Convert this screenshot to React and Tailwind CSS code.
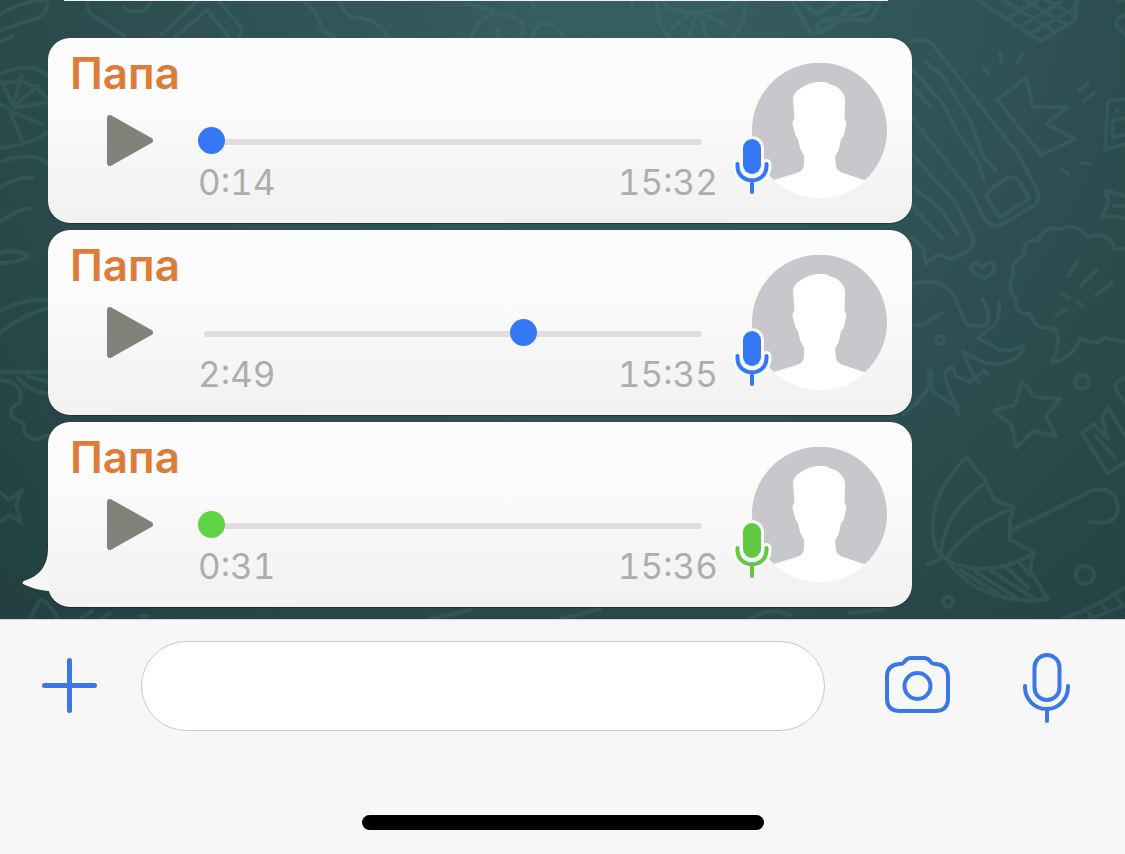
import React from "react";

const messages = [
  { id: "m1", sender: "Папа", elapsed: "0:14", time: "15:32", progress: 0, played: true },
  { id: "m2", sender: "Папа", elapsed: "2:49", time: "15:35", progress: 646, played: true },
  { id: "m3", sender: "Папа", elapsed: "0:31", time: "15:36", progress: 0, played: false, tail: true },
];

function Wallpaper() {
  return (
    <svg
      aria-hidden="true"
      viewBox="0 0 1125 619"
      preserveAspectRatio="xMidYMin slice"
      className="absolute inset-0 h-full w-full text-[#4a7a7a] opacity-25"
      fill="none"
      stroke="currentColor"
      strokeWidth="4"
      strokeLinecap="round"
      strokeLinejoin="round"
    >
      {/* waffle cone */}
      <path d="M978 0 L1007 19 L1041 41 L1075 20 L1077 0 M1007 19 L1038 0 M1020 27 L1060 2 M1030 34 L1075 8 M1003 0 L1056 32 M1025 0 L1067 25 M1046 0 L1076 17" />
      {/* comb */}
      <path d="M912 42 Q925 36 934 46 L1018 154 L1037 190 Q1042 202 1030 208 L1002 224 Q990 230 982 215 L973 195 L912 118" />
      <path d="M912 70 L942 102 L960 136 L978 162 L984 180 M926 62 L942 76 L958 100 M912 87 L930 106 M942 76 L970 120 L984 158 L996 170 M988 199 Q984 194 991 189 L1007 178 Q1016 175 1021 184 L1029 199 L1000 217 Z" />
      <path d="M912 154 L955 202 L974 239 Q974 252 950 259 L938 254 L926 264 L923 247 L912 238 M912 187 L940 208 L958 235 M912 207 L942 238" />
      {/* crown */}
      <path d="M997 100 L1026 78 L1033 107 L1068 107 L1046 124 L1075 139 L1041 155 Z M984 68 L988 73 M1000 53 L1002 63 M1022 53 L1018 62 M1088 83 L1079 91 M1095 92 L1084 101 M1062 170 L1068 174 M1082 163 L1090 164" />
      {/* tickets at the edge */}
      <path d="M1125 99 L1112 100 Q1106 102 1107 112 L1105 150 L1125 144 M1117 110 v2 M1125 118 L1113 120 V138 L1125 134 M1125 196 L1105 190 L1109 202 L1102 216 L1125 218 M1125 206 H1114 M1125 15 Q1114 18 1117 27 L1125 35 M1118 0 h7" />
      {/* speech cloud */}
      <path d="M1125 249 L1115 249 Q1108 230 1088 237 Q1078 222 1060 229 Q1045 225 1038 240 Q1022 240 1024 256 Q1009 262 1014 275 Q1005 290 1017 300 Q1014 315 1030 314 Q1034 328 1048 328 L1056 330 Q1062 345 1051 363 Q1075 357 1080 338 Q1095 347 1104 338 L1125 342" />
      <path d="M1077 262 L1069 276 M1097 270 L1081 286 M1112 283 L1096 295 M1061 293 L1065 296 M1068 298 h1 M1083 307 L1078 302 M1057 315 L1066 309" />
      {/* heart and goose */}
      <path d="M984 278 Q969 272 971 265 Q976 261 983 268 Q990 259 994 265 Q995 274 984 278" />
      <path d="M912 284 Q942 276 954 296 L963 318 L967 325 L984 326 Q994 318 982 299 M999 302 Q1000 325 990 328 L978 338 L1000 350 Q1010 352 1023 346 M1023 349 Q1014 367 985 363 L963 352 L972 373 L979 383 M1016 347 L1022 350" />
      <path d="M903 414 Q925 398 931 382 Q933 368 929 371 Q927 390 942 398 Q958 406 958 414 M958 407 Q940 375 948 369 Q955 365 955 376 L970 382 L984 371 L987 374 M912 325 L922 325 L942 313 M940 336 a4 4 0 1 0 .1 0" />
      {/* star and bubbles */}
      <path d="M1022 382 L1035 397 L1060 399 L1046 416 L1056 436 L1033 431 L1016 448 L1012 425 L993 411 L1015 405 Z" />
      <circle cx="1082" cy="382" r="7" />
      <circle cx="1085" cy="575" r="9" />
      <circle cx="948" cy="602" r="5" />
      {/* letters ticket */}
      <path d="M1125 378 L1117 382 Q1114 386 1118 394 L1125 402 M1125 462 L1108 474 L1082 433 L1094 424 L1108 439 L1102 418 L1108 408 L1125 436 M1096 436 L1115 458" />
      {/* umbrella */}
      <path d="M966 457 C940 486 932 505 933 530 C933 550 941 556 947 560 C967 590 1002 603 1048 600 L1030 570 L1034 552 L1010 540 L1010 520 L1014 507 L994 500 L985 480 Z M941 553 Q945 512 983 485 M947 558 Q968 525 1012 509 M947 560 Q985 580 1034 554 M927 565 L941 558 M1010 531 L1091 491 Q1117 485 1118 509 Q1117 526 1090 522" />
      <path d="M960 570 L1005 598 M976 572 L1020 600 M990 570 L1035 599 M1005 566 L1028 588 M1018 561 L1030 576" />
      {/* film strip */}
      <path d="M1063 619 Q1100 605 1125 587 M1090 619 L1125 605 M1085 609 l8 8 M1100 602 l7 9 M1114 594 l7 9" />
      {/* strip above the first bubble */}
      <path d="M88 0 Q86 14 96 18 L125 36 M124 8 Q130 14 145 10 L152 0 M162 34 L198 0 M176 36 L207 10 L228 36 M218 0 L240 26 Q244 34 238 38 M302 0 Q318 10 322 30 L334 37 M340 0 Q342 18 362 18 Q380 22 388 37" />
      <path d="M466 4 L493 10 M470 38 Q482 10 505 14 Q530 20 520 38 M498 30 v8 M532 38 Q540 16 556 26 L564 38 M530 0 L536 8 M632 0 V4" />
      <path d="M657 0 Q656 25 670 38 M747 0 Q745 24 732 38 M663 0 Q664 12 697 12 Q730 10 737 0 M697 12 L688 38 M699 12 L707 38 M693 12 L672 28 M703 12 L726 26" />
      <path d="M792 0 L811 34 Q825 34 840 20 L870 20 L880 2 M800 0 L816 14 L840 0 M818 30 Q814 20 836 18 Q830 28 818 30 M842 14 Q850 2 870 6 Q862 18 842 14" />
      {/* left edge */}
      <path d="M0 14 Q26 0 46 0 M0 30 L38 18 Q50 10 47 4 M0 42 L12 36 M0 74 Q34 60 48 76 M0 84 Q28 74 48 100 M12 104 L2 82 M13 104 L22 76 M14 106 L38 86 M14 108 L48 102 M12 112 L42 124 M10 112 L22 140 M8 108 L0 104 M0 148 Q30 145 48 132 M0 162 Q34 150 48 164" />
      <path d="M0 187 Q20 176 32 178 M0 222 Q14 210 32 208 M0 253 Q18 249 28 256 Q18 264 0 263 M0 311 Q22 298 48 300 M0 333 Q20 316 48 308 M0 372 H48 M0 380 Q24 382 20 402 Q8 408 12 417 L24 424 Q22 440 38 439 L48 435 M18 378 Q30 392 48 394 M28 376 L48 382" />
      <path d="M0 492 L9 500 L22 490 L16 505 L21 523 L10 515 L0 522 M30 619 L40 600 Q48 600 58 619 M80 619 l12 -8 M100 619 l10 -6 M140 616 h8" />
      <path d="M430 619 L470 610 M560 619 L600 609 M750 619 Q770 606 790 615 M850 613 L885 609" />
    </svg>
  );
}

function MicBadge({ played }) {
  return (
    <svg
      aria-hidden="true"
      viewBox="0 0 42 64"
      className={
        played
          ? "absolute -left-[21px] top-[71px] h-16 w-[42px] text-[#3478f6]"
          : "absolute -left-[21px] top-[71px] h-16 w-[42px] text-[#62c944]"
      }
      fill="none"
      strokeLinecap="round"
    >
      <g stroke="#fafafa">
        <path d="M21 14 V31" strokeWidth="24" />
        <path d="M6.500 30 V32 C6.500 51 35.500 51 35.500 32 V30" strokeWidth="10" />
      </g>
      <g stroke="currentColor">
        <path d="M21 14 V31" strokeWidth="18" />
        <path d="M6.500 30 V32 C6.500 51 35.500 51 35.500 32 V30 M21 46 V58" strokeWidth="4" />
      </g>
    </svg>
  );
}

function Avatar({ played }) {
  return (
    <div className="relative mt-[25px] size-[135px] shrink-0">
      <svg aria-hidden="true" viewBox="0 0 135 135" className="size-full">
        <path fill="#c7c7cc" d="M22 117 A67.500 67.500 0 1 1 113 117 Z" />
        <path
          fill="#ffffff"
          d="M22 117 L46 109.500 Q52 107 52 101 L52 93 L48 85 L46 76 Q43 73 42 67 L40.500 60 Q40.500 57 42.500 57 L41 35 Q43 28 49 25 Q58 19 67 19 Q73 18 80 22 Q86 23 89 28 Q94 33 93 40 L92.500 57 Q95 57 94 62 L92 71 Q91 75 89 76 L87 86 L83 94 L84 103 Q85 108 91 110 L113.500 117.500 A67.500 67.500 0 0 1 22 117 Z"
        />
      </svg>
      <MicBadge played={played} />
    </div>
  );
}

function VoiceMessage({ message }) {
  const { sender, elapsed, time, progress, played, tail } = message;
  return (
    <li className="relative flex rounded-[22px] bg-linear-to-b from-[#fcfcfc] from-30% to-[#f2f1f1] pr-[25px] pl-[22px] shadow-[0_1px_1px_rgba(0,0,0,0.35)]">
      {tail && (
        <svg
          aria-hidden="true"
          viewBox="0 0 30 48"
          className="absolute bottom-3 -left-[26px] h-12 w-[30px]"
        >
          <path d="M27 2 H26 C26 18 18 29 2 34 Q-1 36 2 37.500 Q14 43 26.500 44 L29 46 L27 30 Z" fill="#f6f6f6" />
        </svg>
      )}
      <div className="min-w-0 flex-1 pt-[9px] pb-[19px]">
        <h2 className="text-[44px] leading-[52px] font-semibold text-[#dd7c36]">{sender}</h2>
        <div className="mt-4 flex items-start">
          <button type="button" aria-label="Воспроизвести" className="ml-[37px] shrink-0">
            <svg aria-hidden="true" viewBox="0 0 46 51" className="h-[51px] w-[46px]">
              <path
                d="M3 3 L43 25.500 L3 48 Z"
                fill="#82827b"
                stroke="#82827b"
                strokeWidth="6"
                strokeLinejoin="round"
              />
            </svg>
          </button>
          <div className="mr-[34px] ml-[45px] min-w-0 flex-1 pt-3">
            <div className="mr-2.5 grid items-center">
              <span className="col-start-1 row-start-1 mx-1.5 mt-0.5 h-1.5 rounded-full bg-[#dedede]" />
              <input
                type="range"
                min="0"
                max="1000"
                defaultValue={progress}
                aria-label={"Позиция " + elapsed}
                className={
                  played
                    ? "z-10 col-start-1 row-start-1 m-0 h-[27px] w-full appearance-none bg-transparent [&::-webkit-slider-thumb]:size-[27px] [&::-webkit-slider-thumb]:appearance-none [&::-webkit-slider-thumb]:rounded-full [&::-webkit-slider-thumb]:bg-[#3478f6]"
                    : "z-10 col-start-1 row-start-1 m-0 h-[27px] w-full appearance-none bg-transparent [&::-webkit-slider-thumb]:size-[27px] [&::-webkit-slider-thumb]:appearance-none [&::-webkit-slider-thumb]:rounded-full [&::-webkit-slider-thumb]:bg-[#5fd545]"
                }
              />
            </div>
            <div className="mt-1.5 flex justify-between text-[35px] leading-[44px] text-[#adadad] tabular-nums">
              <span>{elapsed}</span>
              <time>{time}</time>
            </div>
          </div>
        </div>
      </div>
      <Avatar played={played} />
    </li>
  );
}

function Composer() {
  return (
    <footer className="flex-1 border-t border-[#d4d6d8] bg-[#f7f7f7] pt-[21px] pb-6">
      <form className="flex items-center pr-[55px] pl-[42px] text-[#3b78e7]" onSubmit={(e) => e.preventDefault()}>
        <button type="button" aria-label="Прикрепить" className="shrink-0">
          <svg aria-hidden="true" viewBox="0 0 55 57" className="h-[57px] w-[55px]" stroke="currentColor" strokeWidth="5" strokeLinecap="round">
            <path d="M27.500 2.500 V52.500 M2.500 27.500 H52.500" />
          </svg>
        </button>
        <input
          type="text"
          aria-label="Сообщение"
          className="ml-11 h-[90px] min-w-0 flex-1 rounded-full border border-[#c8c8cc] bg-white px-9 text-[36px] text-black outline-none"
        />
        <button type="button" aria-label="Камера" className="ml-[60px] shrink-0">
          <svg aria-hidden="true" viewBox="0 0 65 61" className="h-[61px] w-[65px]" fill="none" stroke="currentColor" strokeWidth="4" strokeLinejoin="round">
            <path d="M14 8 C18 8 18 7.500 20 5 Q22.500 2 26 2 H39 Q42.500 2 45 5 C47 7.500 47 8 51 8 Q63 9 63 21 V42 Q63 55 50 55 H15 Q2 55 2 42 V21 Q2 9 14 8 Z" />
            <circle cx="32.500" cy="30" r="13" />
          </svg>
        </button>
        <button type="button" aria-label="Голосовое сообщение" className="ml-[73px] shrink-0">
          <svg aria-hidden="true" viewBox="0 -4 47 74" className="h-[74px] w-[47px]" fill="none" stroke="currentColor" strokeWidth="4" strokeLinecap="round">
            <rect x="11.500" y="2" width="25" height="45" rx="12.500" />
            <path d="M2 33 V34 A21.500 22 0 0 0 45 34 V33 M24 57 V68" />
          </svg>
        </button>
      </form>
      <div className="mx-auto mt-[84px] h-[15px] w-[402px] rounded-full bg-black" />
    </footer>
  );
}

export default function App() {
  return (
    <div className="flex min-h-screen flex-col font-['Inter','Liberation_Sans',sans-serif]">
      <main className="relative bg-[radial-gradient(ellipse_at_55%_-10%,#386062_0%,#2f5254_45%,#233f40_100%)] pr-[213px] pb-3 pl-12">
        <Wallpaper />
        <div className="relative mr-6 ml-4 h-px bg-[#f2f1f1]" />
        <ul className="relative mt-[37px] flex flex-col gap-[7px]">
          {messages.map((m) => (
            <VoiceMessage key={m.id} message={m} />
          ))}
        </ul>
      </main>
      <Composer />
    </div>
  );
}
